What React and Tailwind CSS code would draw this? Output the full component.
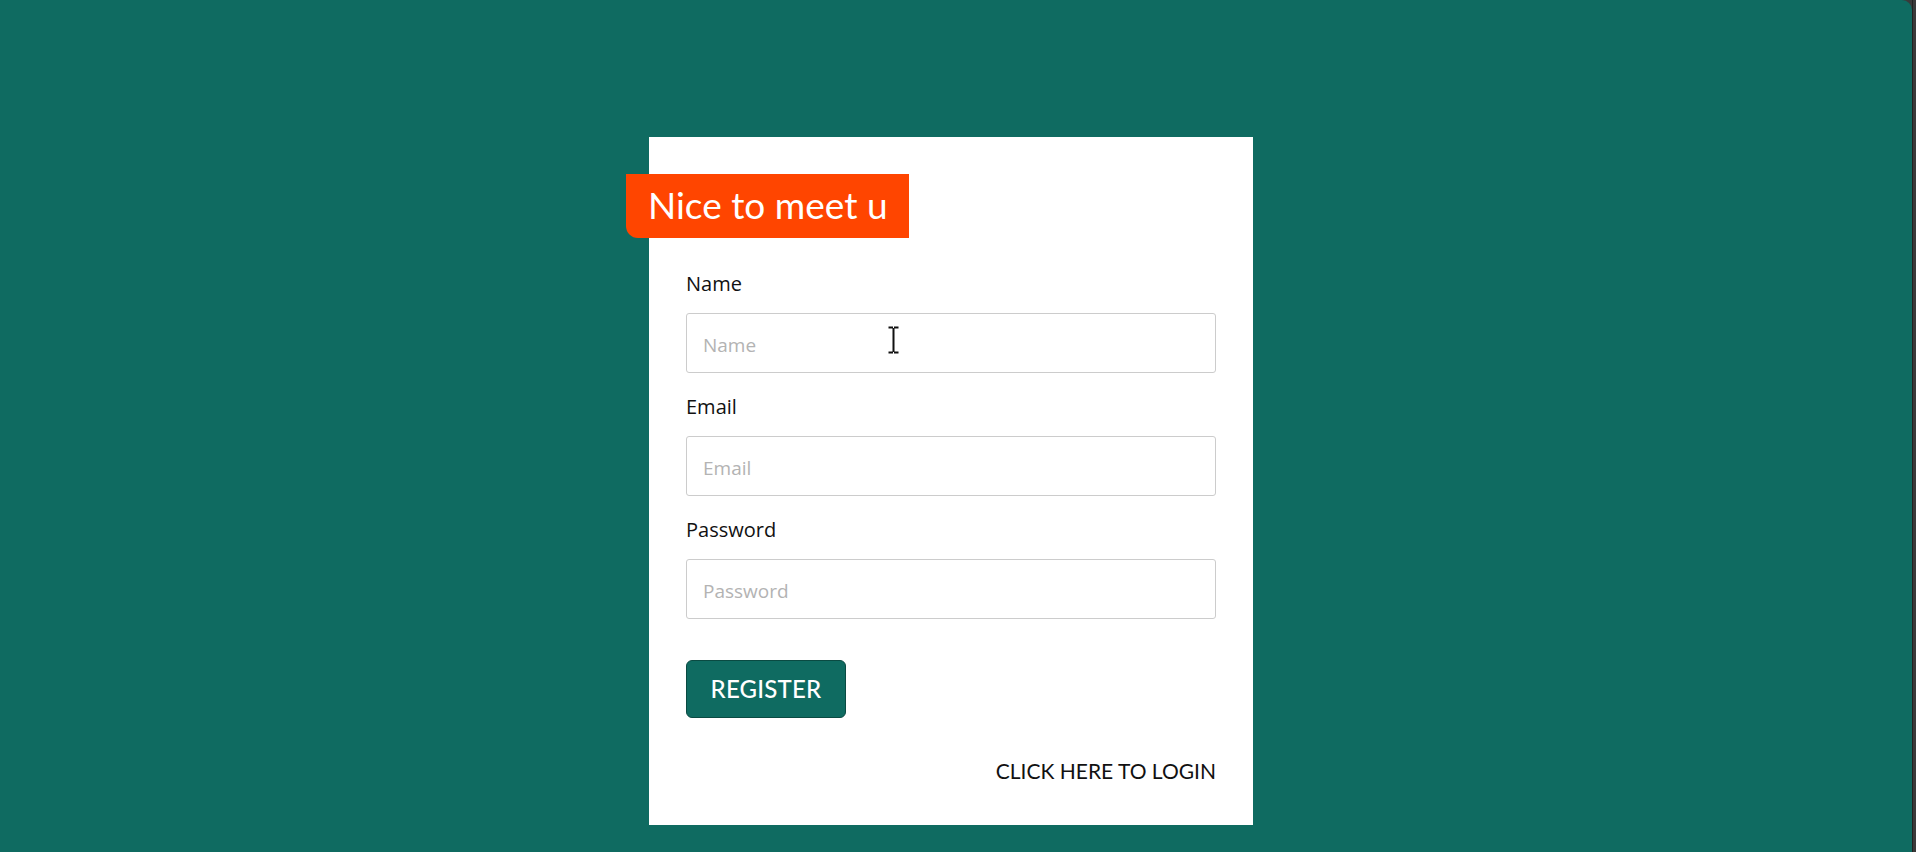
const fields = [
  { label: "Name", type: "text" },
  { label: "Email", type: "email" },
  { label: "Password", type: "password" },
];

const TextCursor = () => (
  <svg
    className="absolute left-[201px] top-[13px] pointer-events-none"
    width="13"
    height="28"
    viewBox="0 0 13 28"
  >
    <path
      d="M1.5 1.5h4M7.5 1.5h4M6.5 2v24M1.5 26.5h4M7.5 26.5h4"
      stroke="#ffffff"
      strokeWidth="3.6"
      fill="none"
    />
    <path
      d="M1.5 1.5h4.5M7 1.5h4.5M6.5 2v24M1.5 26.5h4.5M7 26.5h4.5"
      stroke="#111111"
      strokeWidth="2"
      fill="none"
    />
  </svg>
);

export default function App() {
  return (
    <div className="flex min-h-[852px] bg-[#3a3a3a] font-['Lato','Liberation_Sans',sans-serif]">
      <div className="flex-1 flex justify-center bg-[#0f6b61] rounded-tr-[10px] pt-[137px] pr-[10px]">
        <div className="w-[604px] h-[688px] bg-white px-[37px] pt-[37px]">
          <div className="-ml-[60px] w-[283px] h-16 flex items-center pl-[22px] pb-[4px] bg-[#ff4500] rounded-bl-xl text-white text-[37px] leading-none">
            Nice to meet u
          </div>

          <form className="mt-[34px] flex flex-col gap-[22px]" onSubmit={(e) => e.preventDefault()}>
            {fields.map((f, i) => (
              <div key={f.label} className="flex flex-col">
                <label className="font-['Open_Sans',sans-serif] text-[20px] leading-6 font-medium text-[#111] mb-[17px]">
                  {f.label}
                </label>
                <div className="relative">
                  <input
                    type={f.type}
                    placeholder={f.label}
                    className="w-full h-[60px] border border-[#cccccc] rounded-[3px] pl-[16px] pt-[3px] font-['Open_Sans',sans-serif] text-[19px] text-[#222] placeholder:text-[#b3b3b3] outline-none"
                  />
                  {i === 0 && <TextCursor />}
                </div>
              </div>
            ))}

            <div className="mt-[19px]">
              <button
                type="submit"
                className="w-[160px] h-[58px] bg-[#0f6b61] border border-[#0a4a42] rounded-md text-white text-[24px] font-medium tracking-[0.2px] leading-none"
              >
                REGISTER
              </button>
            </div>
          </form>

          <div className="mt-[39px] text-right">
            <a href="#" className="text-[21px] leading-7 text-[#111]">
              CLICK HERE TO LOGIN
            </a>
          </div>
        </div>
      </div>
      <div className="w-[4px] bg-[#3a3a3a] border-l border-[#222]" />
    </div>
  );
}
